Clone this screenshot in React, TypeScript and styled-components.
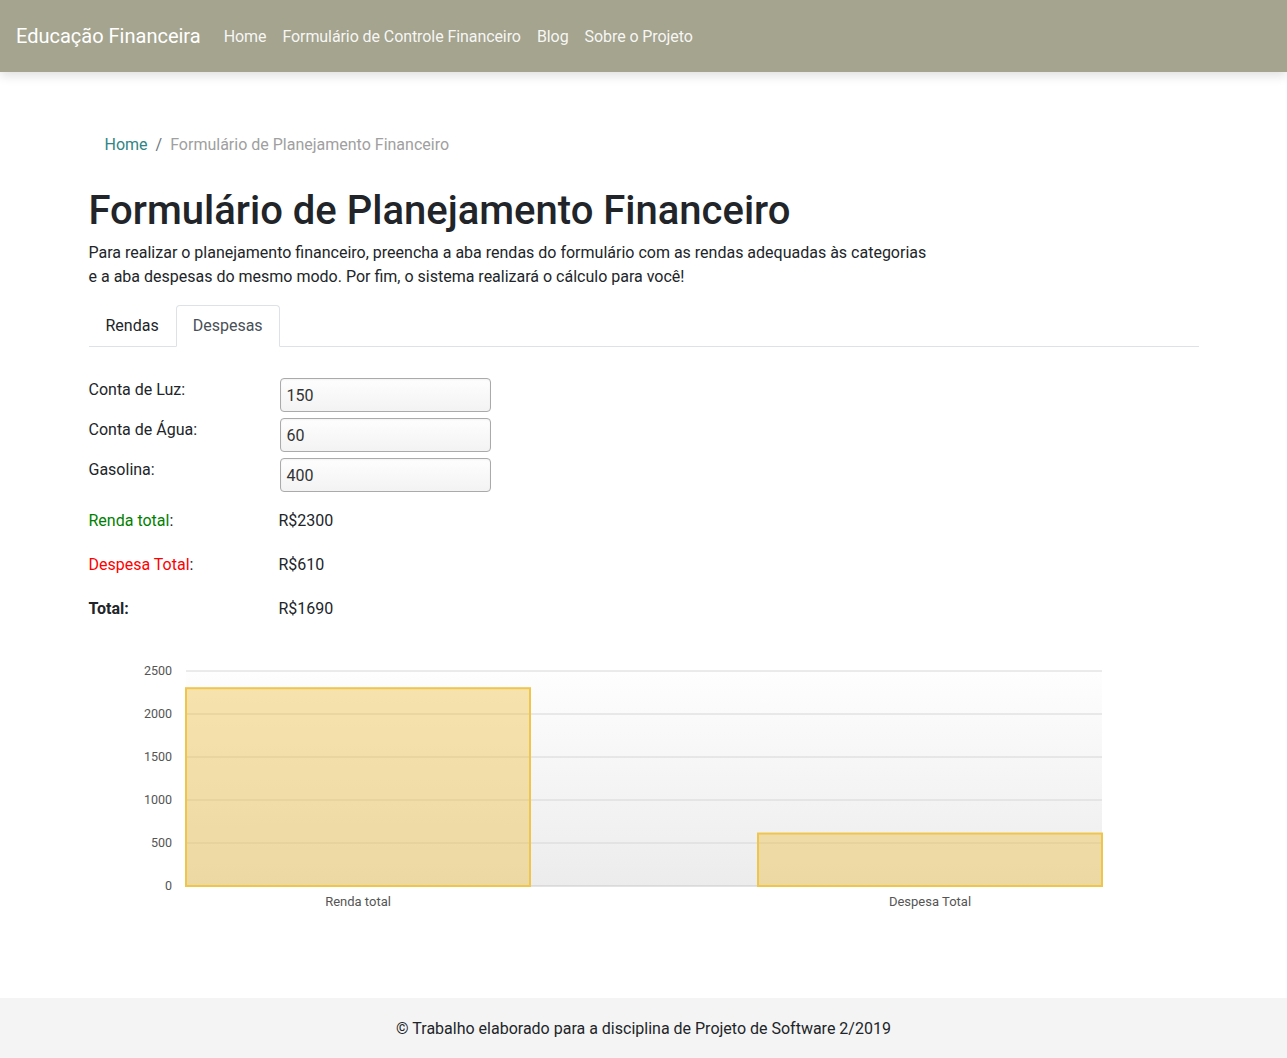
import React from "react";
import styled, { createGlobalStyle } from "styled-components";

const GlobalStyle = createGlobalStyle`
  * { box-sizing: border-box; }
  body {
    margin: 0;
    font-family: Roboto, "Liberation Sans", sans-serif;
    font-size: 16px;
    line-height: 1.5;
    color: #212529;
    background: #fff;
  }
`;

const Page = styled.div`
  min-height: 100vh;
  display: flex;
  flex-direction: column;
`;

const Navbar = styled.nav`
  height: 72px;
  background: #a5a48f;
  display: flex;
  align-items: center;
  padding: 0 16px;
  box-shadow: 0 4px 10px rgba(0, 0, 0, 0.12);
`;

const Brand = styled.a`
  font-size: 20px;
  color: #fff;
  margin-right: 15px;
  text-decoration: none;
`;

const NavLinks = styled.div`
  display: flex;
  padding-top: 1px;
`;

const NavLink = styled.a`
  color: rgba(255, 255, 255, 0.92);
  padding: 8px;
  letter-spacing: -0.08px;
  text-decoration: none;
`;

const Container = styled.main`
  width: 1110px;
  margin: 0 auto;
  padding-top: 49px;
`;

const Breadcrumb = styled.ol`
  list-style: none;
  display: flex;
  margin: 0 0 18px;
  padding: 12px 16px;

  & > li + li::before {
    content: "/";
    color: #6c757d;
    padding: 0 8px;
  }
`;

const Crumb = styled.li<{ $active?: boolean }>`
  color: ${(p) => (p.$active ? "#a0a0a0" : "#2f8585")};
`;

const Title = styled.h1`
  font-size: 40px;
  font-weight: 500;
  line-height: 1.2;
  margin: 0 0 6px;
`;

const Lead = styled.p`
  margin: 0 0 16px;
`;

const Tabs = styled.div`
  display: flex;
  border-bottom: 1px solid #dee2e6;
`;

const Tab = styled.a<{ $active?: boolean }>`
  display: block;
  padding: 8px 16px;
  margin-bottom: -1px;
  border: 1px solid transparent;
  border-color: ${(p) => (p.$active ? "#dee2e6 #dee2e6 #fff" : "transparent")};
  border-radius: 4px 4px 0 0;
  background: ${(p) => (p.$active ? "#fff" : "transparent")};
  color: ${(p) => (p.$active ? "#495057" : "#212529")};
`;

const Form = styled.div`
  margin-top: 31px;
  display: flex;
  flex-direction: column;
  gap: 6px;
`;

const FieldRow = styled.div`
  display: grid;
  grid-template-columns: 191px 211px;
  align-items: start;
  height: 34px;
`;

const Input = styled.div`
  height: 34px;
  border: 1px solid #aaaaaa;
  border-radius: 4px;
  background: linear-gradient(#fefefe, #f3f3f3);
  box-shadow: inset 0 1px 2px rgba(0, 0, 0, 0.05);
  padding: 5px 6px 0;
  color: #333;
`;

const Results = styled.div`
  margin-top: 17px;
  display: flex;
  flex-direction: column;
  gap: 20px;
`;

const ResultRow = styled.div`
  display: grid;
  grid-template-columns: 190px auto;
`;

const ResultLabel = styled.span<{ $bold?: boolean }>`
  font-weight: ${(p) => (p.$bold ? 700 : 400)};
`;

const Colored = styled.span<{ $color: string }>`
  color: ${(p) => p.$color};
`;

const ChartWrap = styled.div`
  margin-top: 20px;
`;

const Footer = styled.footer`
  margin-top: auto;
  height: 60px;
  padding-top: 1px;
  background: #f4f4f4;
  display: flex;
  align-items: center;
  justify-content: center;
`;

const Chart: React.FC = () => {
  const left = 97;
  const right = 1013;
  const top = 30;
  const bottom = 245;
  const max = 2500;
  const scale = (bottom - top) / max;
  const ticks = [0, 500, 1000, 1500, 2000, 2500];
  const bars = [
    { label: "Renda total", value: 2300, x: 97 },
    { label: "Despesa Total", value: 610, x: 669 },
  ];
  const bw = 344;
  return (
    <svg width="1110" height="290" viewBox="0 0 1110 290">
      <defs>
        <linearGradient id="plotbg" x1="0" y1="0" x2="0" y2="1">
          <stop offset="0" stopColor="#fefefe" />
          <stop offset="1" stopColor="#ececec" />
        </linearGradient>
      </defs>
      <rect x={left} y={top} width={right - left} height={bottom - top} fill="url(#plotbg)" />
      {ticks.map((t) => {
        const y = bottom - t * scale;
        return (
          <g key={t}>
            <line x1={left} x2={right} y1={y} y2={y} stroke={t === 0 ? "#c8c8c8" : "#d6d6d6"} strokeWidth={1} />
            <text
              x={83}
              y={y + 4}
              textAnchor="end"
              fontSize="12.5"
              fill="#555"
              fontFamily="Roboto, sans-serif"
            >
              {t}
            </text>
          </g>
        );
      })}
      {bars.map((b) => {
        const h = b.value * scale;
        return (
          <g key={b.label}>
            <rect
              x={b.x}
              y={bottom - h}
              width={bw}
              height={h}
              fill="rgba(238,188,55,0.4)"
              stroke="#efc54c"
              strokeWidth={2}
            />
            <text
              x={b.x + bw / 2}
              y={265}
              textAnchor="middle"
              fontSize="13"
              fill="#555"
              fontFamily="Roboto, sans-serif"
            >
              {b.label}
            </text>
          </g>
        );
      })}
    </svg>
  );
};

export default function App() {
  const fields = [
    { label: "Conta de Luz:", value: "150" },
    { label: "Conta de Água:", value: "60" },
    { label: "Gasolina:", value: "400" },
  ];
  return (
    <Page>
      <GlobalStyle />
      <Navbar>
        <Brand>Educação Financeira</Brand>
        <NavLinks>
          <NavLink>Home</NavLink>
          <NavLink>Formulário de Controle Financeiro</NavLink>
          <NavLink>Blog</NavLink>
          <NavLink>Sobre o Projeto</NavLink>
        </NavLinks>
      </Navbar>
      <Container>
        <Breadcrumb>
          <Crumb>Home</Crumb>
          <Crumb $active>Formulário de Planejamento Financeiro</Crumb>
        </Breadcrumb>
        <Title>Formulário de Planejamento Financeiro</Title>
        <Lead>
          Para realizar o planejamento financeiro, preencha a aba rendas do formulário com as rendas adequadas às categorias
          <br />e a aba despesas do mesmo modo. Por fim, o sistema realizará o cálculo para você!
        </Lead>
        <Tabs>
          <Tab>Rendas</Tab>
          <Tab $active>Despesas</Tab>
        </Tabs>
        <Form>
          {fields.map((f) => (
            <FieldRow key={f.label}>
              <span>{f.label}</span>
              <Input>{f.value}</Input>
            </FieldRow>
          ))}
        </Form>
        <Results>
          <ResultRow>
            <ResultLabel>
              <Colored $color="#008000">Renda total</Colored>:
            </ResultLabel>
            <span>R$2300</span>
          </ResultRow>
          <ResultRow>
            <ResultLabel>
              <Colored $color="#ff0000">Despesa Total</Colored>:
            </ResultLabel>
            <span>R$610</span>
          </ResultRow>
          <ResultRow>
            <ResultLabel $bold>Total:</ResultLabel>
            <span>R$1690</span>
          </ResultRow>
        </Results>
        <ChartWrap>
          <Chart />
        </ChartWrap>
      </Container>
      <Footer>© Trabalho elaborado para a disciplina de Projeto de Software 2/2019</Footer>
    </Page>
  );
}
